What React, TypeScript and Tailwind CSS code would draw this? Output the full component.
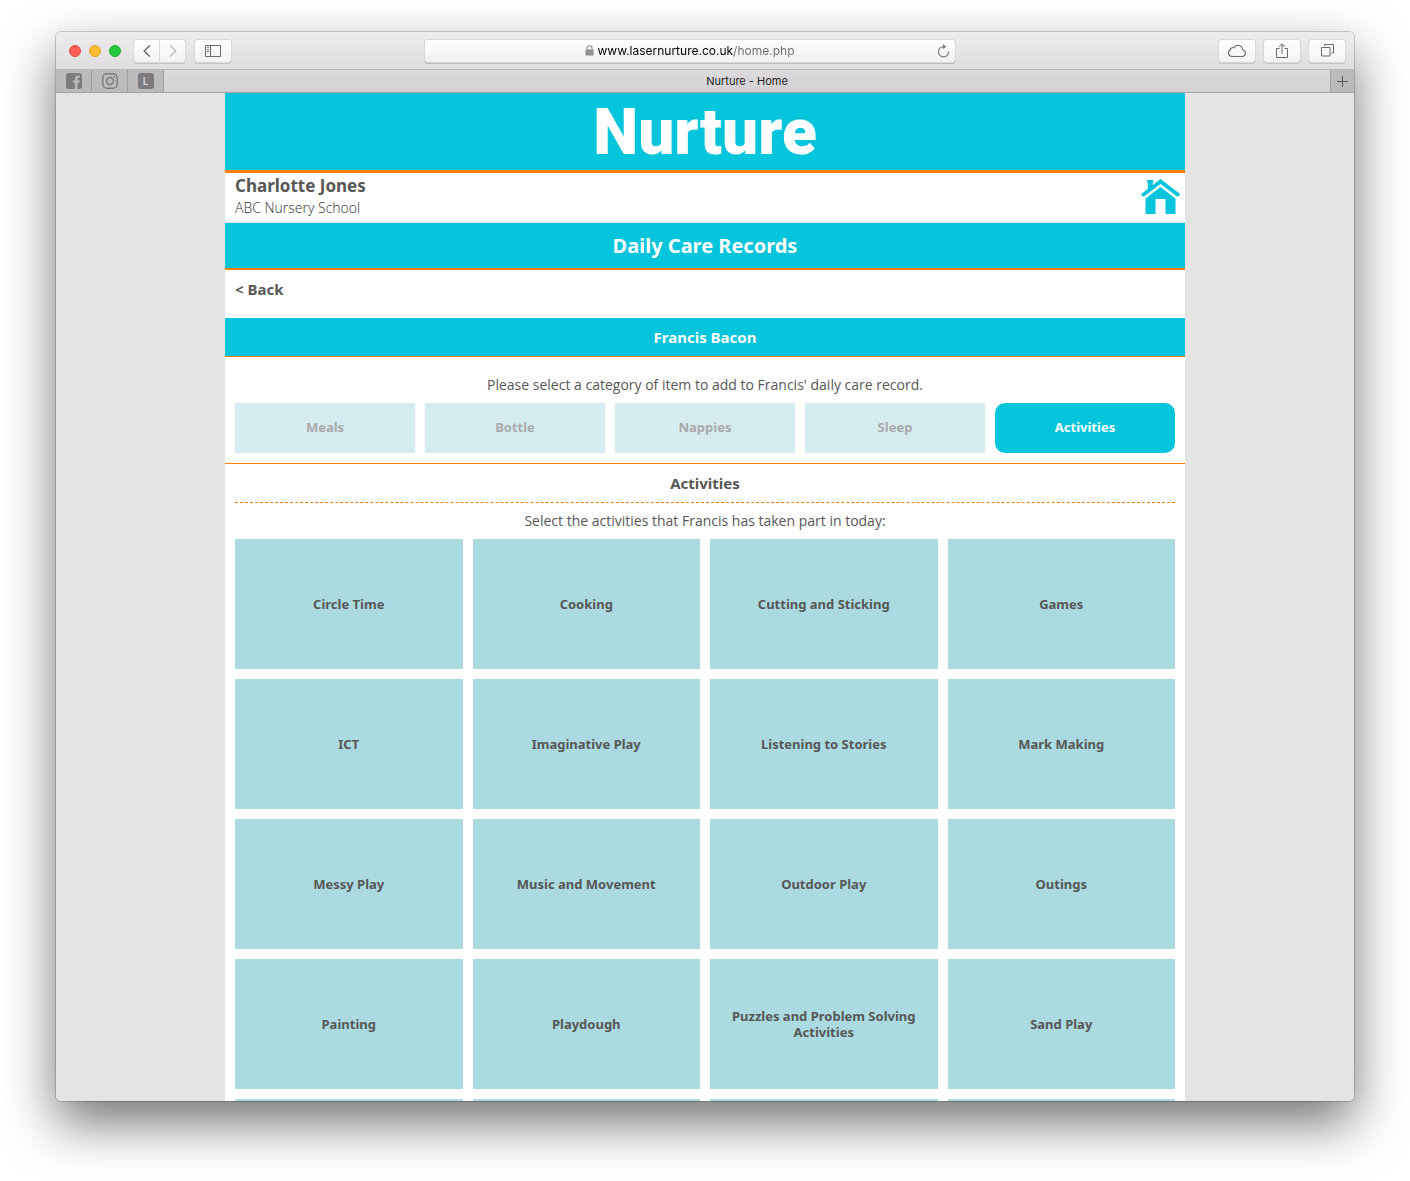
import type { ReactNode } from "react";

const categories = ["Meals", "Bottle", "Nappies", "Sleep", "Activities"];

const activities = [
  "Circle Time",
  "Cooking",
  "Cutting and Sticking",
  "Games",
  "ICT",
  "Imaginative Play",
  "Listening to Stories",
  "Mark Making",
  "Messy Play",
  "Music and Movement",
  "Outdoor Play",
  "Outings",
  "Painting",
  "Playdough",
  "Puzzles and Problem Solving Activities",
  "Sand Play",
  "",
  "",
  "",
  "",
];

function ToolButton({ label, className, children }: { label: string; className: string; children: ReactNode }) {
  return (
    <button
      type="button"
      aria-label={label}
      className={`flex h-[22px] items-center justify-center bg-linear-to-b from-white to-[#f3f2f3] text-[#6b6b6b] shadow-[0_0_0_1px_#d8d6d8,0_1px_0_1px_#c6c4c6] ${className}`}
    >
      {children}
    </button>
  );
}

function Toolbar() {
  return (
    <div className="grid h-[37px] shrink-0 grid-cols-[1fr_minmax(0,530px)_1fr] items-center bg-linear-to-b from-[#eeecee] to-[#e0dde0] pr-[9px]">
      <div className="flex items-center pl-[13px]">
        <div className="flex gap-2">
          <button type="button" aria-label="Close" className="size-3 rounded-full border border-[#e2463f] bg-[#ff5f57]" />
          <button type="button" aria-label="Minimise" className="size-3 rounded-full border border-[#e0a032] bg-[#ffbd2e]" />
          <button type="button" aria-label="Zoom" className="size-3 rounded-full border border-[#1aab29] bg-[#28c940]" />
        </div>
        <div className="ml-[13px] flex gap-px">
          <ToolButton label="Previous page" className="w-[25px] rounded-l-[3px]">
            <svg width="8" height="14" viewBox="0 0 8 14" fill="none" stroke="currentColor" strokeWidth="1.4">
              <path d="M6.8 1.5 1.2 7l5.6 5.5" />
            </svg>
          </ToolButton>
          <ToolButton label="Next page" className="w-[25px] rounded-r-[3px]">
            <svg width="8" height="14" viewBox="0 0 8 14" fill="none" stroke="#bdbdbd" strokeWidth="1.4">
              <path d="M1.2 1.5 6.8 7l-5.6 5.5" />
            </svg>
          </ToolButton>
        </div>
        <ToolButton label="Show sidebar" className="ml-[10px] w-[36px] rounded-[3px]">
          <svg width="16" height="12" viewBox="0 0 16 12" fill="none" stroke="currentColor">
            <path d="M.5.5h15v11H.5zM5.5.5v11M2 2.5h2M2 4.5h2M2 6.5h2" />
          </svg>
        </ToolButton>
      </div>
      <form
        className="relative -ml-[11px] mr-[11px] flex h-[22px] items-center justify-center gap-1 rounded-[3px] bg-linear-to-b from-white to-[#f1f0f1] shadow-[0_0_0_1px_#d8d6d8,0_1px_0_1px_#bdbbbd]"
        onSubmit={(e) => e.preventDefault()}
      >
        <svg width="9" height="11" viewBox="0 0 9 11" aria-hidden="true">
          <rect x=".5" y="4.5" width="8" height="6" rx=".6" fill="#8e8e8e" />
          <path d="M2 5V3.2a2.5 2.5 0 0 1 5 0V5" fill="none" stroke="#8e8e8e" strokeWidth="1.1" />
        </svg>
        <input
          aria-label="Address"
          defaultValue="www.lasernurture.co.uk/home.php"
          className="field-sizing-content bg-[linear-gradient(90deg,#000_69%,#6a6a6a_69%)] bg-clip-text font-[Inter,sans-serif] text-[12px] leading-4 text-transparent outline-none"
        />
        <button type="button" aria-label="Reload" className="absolute right-[5px] text-[#777]">
          <svg width="13" height="14" viewBox="0 0 13 14" fill="none" stroke="currentColor" strokeWidth="1.1">
            <path d="M11.6 7.6A5.1 5.1 0 1 1 6.5 2.7h1" />
            <path d="M5.9.3 9.4 2.7 5.9 5.1z" fill="currentColor" stroke="none" />
          </svg>
        </button>
      </form>
      <div className="flex justify-end gap-[9px]">
        <ToolButton label="iCloud tabs" className="w-[36px] rounded-[3px]">
          <svg width="20" height="14" viewBox="0 0 20 14" fill="none" stroke="currentColor" strokeWidth="1.1">
            <path d="M4.9 12.5a3.4 3.4 0 0 1-1.6-6.4 2.5 2.5 0 0 1 3.6-2.3 4.6 4.6 0 0 1 8.6 2 3.4 3.4 0 0 1 .2 6.7z" />
          </svg>
        </ToolButton>
        <ToolButton label="Share" className="w-[36px] rounded-[3px]">
          <svg width="12" height="16" viewBox="0 0 12 16" fill="none" stroke="currentColor">
            <path d="M3.5 5.5h-3v9h11v-9h-3M6 10.5V1M3 3.8 6 .9l3 2.9" />
          </svg>
        </ToolButton>
        <ToolButton label="Show all tabs" className="w-[36px] rounded-[3px]">
          <svg width="13" height="13" viewBox="0 0 13 13" fill="none" stroke="currentColor">
            <path d="M.5 3.5H9V12H.5zM3.500 2V.5h9V9h-2" />
          </svg>
        </ToolButton>
      </div>
    </div>
  );
}

function TabBar() {
  const pinned = "flex w-9 items-center justify-center border-r border-[#a09ea0] text-[#7d7b7d]";
  return (
    <div className="flex h-6 shrink-0 border-y border-t-[#b9b7b9] border-b-[#a3a1a3] bg-linear-to-b from-[#dcdadc] to-[#d3d1d3]">
      <div className="flex bg-[#bcbabc]">
        <button type="button" aria-label="Facebook" className={pinned}>
          <svg width="16" height="16" viewBox="0 0 16 16">
            <rect width="16" height="16" rx="3" fill="currentColor" />
            <path d="M9 16V9.7H7V7.3h2V5.5C9 3.5 10.2 2.5 12 2.5h1.7v2.3h-1.2c-.8 0-1 .4-1 1v1.5h2.2l-.3 2.4h-1.9V16z" fill="#bcbabc" />
          </svg>
        </button>
        <button type="button" aria-label="Instagram" className={pinned}>
          <svg width="16" height="16" viewBox="0 0 16 16" fill="none" stroke="currentColor" strokeWidth="1.5">
            <rect x=".8" y=".8" width="14.4" height="14.4" rx="4" />
            <circle cx="8" cy="8" r="3.4" />
            <circle cx="12.2" cy="3.8" r=".9" fill="currentColor" stroke="none" />
          </svg>
        </button>
        <button type="button" aria-label="L" className={pinned}>
          <span className="flex size-4 items-center justify-center rounded-[3px] bg-[#7d7b7d] font-[Inter,sans-serif] text-[10px] font-bold text-[#cfcdcf]">
            L
          </span>
        </button>
      </div>
      <button type="button" className="min-w-0 flex-1 truncate font-[Inter,sans-serif] text-[11px] text-[#222]">
        Nurture - Home
      </button>
      <button type="button" aria-label="New tab" className="flex w-6 items-center justify-center border-l border-[#a3a1a3] bg-[#bcbabc] text-[#555]">
        <svg width="11" height="11" viewBox="0 0 11 11" stroke="currentColor">
          <path d="M5.5 0v11M0 5.5h11" />
        </svg>
      </button>
    </div>
  );
}

export default function App() {
  return (
    <div className="flex h-screen flex-col bg-white px-14 pt-8 pb-20 font-['Noto_Sans',sans-serif] text-[#575756]">
      <div className="flex min-h-0 flex-1 flex-col rounded-[5px] shadow-[0_0_0_1px_rgba(0,0,0,0.18),0_22px_52px_0_rgba(0,0,0,0.55)]">
        <div className="flex min-h-0 flex-1 flex-col overflow-hidden rounded-[5px] bg-[#e4e4e4]">
          <Toolbar />
          <TabBar />
          <main className="mx-auto min-h-0 w-full max-w-[960px] flex-1 overflow-hidden bg-white">
            <header className="flex h-20 items-center justify-center border-b-3 border-[#ff7d00] bg-[#04c5db] pt-[2px]">
              <span className="font-[Roboto,sans-serif] text-[64px] leading-[75px] font-black text-white">Nurture</span>
            </header>
            <div className="flex h-[50px] items-start justify-between border-b border-[#e4e4e4] pt-[2px] pr-[5px] pl-[10px]">
              <div>
                <p className="text-[17px] leading-[22px] font-bold">Charlotte Jones</p>
                <p className="font-['Open_Sans',sans-serif] text-[14px] leading-[22px] font-light text-[#333]">ABC Nursery School</p>
              </div>
              <a href="#home" aria-label="Home" className="pt-1 text-[#04c5db]">
                <svg width="39" height="36" viewBox="0 0 39 36" fill="currentColor">
                  <path d="M6 1.5Q6 1 7 1h4.5q1 0 1 1v1q0 .6-.8.7v2.3L19.5 0 38.5 14.5q.9 1-.2 2l-1 .8q-.8.6-1.6 0L19.5 5 3.300 17.300q-.8.6-1.600 0l-1-.8q-1.100-1 .2-2l6-4.800V3.700Q6 3.600 6 3z" />
                  <path d="M19.5 8 34.5 19.5V35H24.500V20H14.500v15H4.500V19.500z" />
                </svg>
              </a>
            </div>
            <h1 className="flex h-[47px] items-center justify-center border-b-2 border-[#ff7d00] bg-[#04c5db] text-[20px] font-bold text-white">
              Daily Care Records
            </h1>
            <div className="flex h-12 items-center px-[10px] pb-[10px]">
              <a href="#back" className="text-[15px] font-bold">&lt; Back</a>
            </div>
            <h2 className="flex h-[39px] items-center justify-center border-b border-[#ff7d00] bg-[#04c5db] text-[15px] font-bold text-white">
              Francis Bacon
            </h2>
            <section className="border-b border-[#ff7d00] px-[10px] pt-[18px] pb-[10px]">
              <p className="mb-2 text-center font-['Open_Sans',sans-serif] text-[14px] leading-5">
                Please select a category of item to add to Francis&#39; daily care record.
              </p>
              <div className="grid grid-cols-5 gap-[10px]">
                {categories.map((name) => (
                  <button
                    key={name}
                    type="button"
                    aria-pressed={name === "Activities"}
                    className={
                      name === "Activities"
                        ? "h-[50px] rounded-[10px] bg-[#04c5db] text-[13px] font-bold text-white"
                        : "h-[50px] bg-[#d5ecf0] text-[13px] font-bold text-[#aaaaaa]"
                    }
                  >
                    {name}
                  </button>
                ))}
              </div>
            </section>
            <section className="px-[10px]">
              <h3 className="h-[39px] border-b border-dashed border-[#ff7d00] text-center text-[15px] leading-[38px] font-bold">
                Activities
              </h3>
              <p className="py-2 text-center font-['Open_Sans',sans-serif] text-[14px] leading-5">
                Select the activities that Francis has taken part in today:
              </p>
              <div className="grid grid-cols-4 gap-[10px]">
                {activities.map((name, i) => (
                  <button
                    key={i}
                    type="button"
                    className="h-[130px] bg-[#abdae0] px-4 text-[13px] leading-4 font-bold"
                  >
                    {name}
                  </button>
                ))}
              </div>
            </section>
          </main>
        </div>
      </div>
    </div>
  );
}
